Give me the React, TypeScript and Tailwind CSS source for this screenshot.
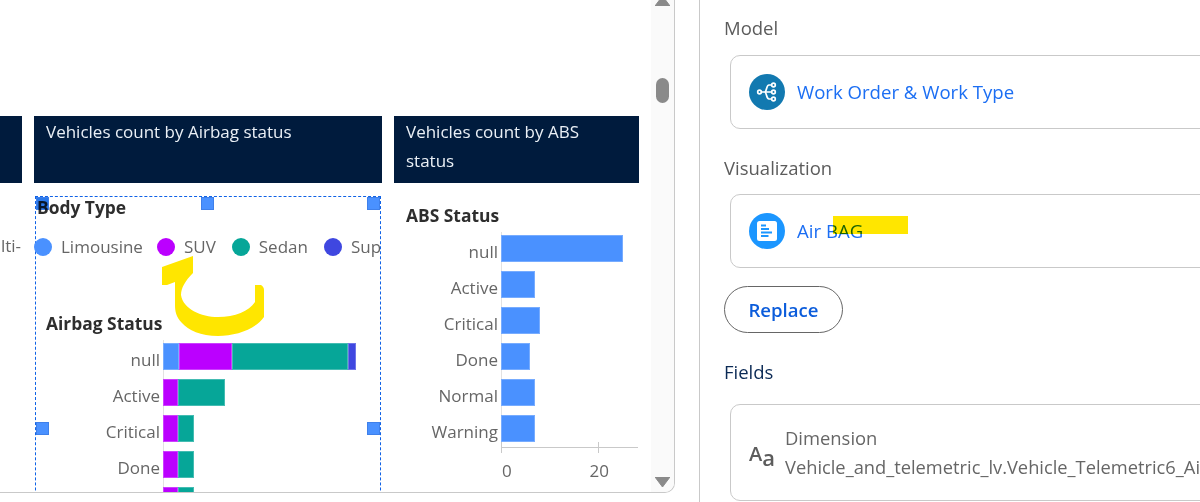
const FONT = "font-['Open_Sans','Noto_Sans',sans-serif]";

type Segment = { width: number; color: string };
type BarRow = { label: string; segments: Segment[] };

const BLUE = 'bg-[#4a91ff]';
const PURPLE = 'bg-[#bb00ff]';
const TEAL = 'bg-[#06a698]';
const INDIGO = 'bg-[#3f47e0]';

const AIRBAG_ROWS: BarRow[] = [
  {
    label: 'null',
    segments: [
      { width: 16, color: BLUE },
      { width: 53, color: PURPLE },
      { width: 116, color: TEAL },
      { width: 8, color: INDIGO },
    ],
  },
  {
    label: 'Active',
    segments: [
      { width: 15, color: PURPLE },
      { width: 47, color: TEAL },
    ],
  },
  {
    label: 'Critical',
    segments: [
      { width: 15, color: PURPLE },
      { width: 16, color: TEAL },
    ],
  },
  {
    label: 'Done',
    segments: [
      { width: 15, color: PURPLE },
      { width: 16, color: TEAL },
    ],
  },
  {
    label: '',
    segments: [
      { width: 15, color: PURPLE },
      { width: 16, color: TEAL },
    ],
  },
];

const ABS_ROWS: BarRow[] = [
  { label: 'null', segments: [{ width: 122, color: BLUE }] },
  { label: 'Active', segments: [{ width: 34, color: BLUE }] },
  { label: 'Critical', segments: [{ width: 39, color: BLUE }] },
  { label: 'Done', segments: [{ width: 29, color: BLUE }] },
  { label: 'Normal', segments: [{ width: 34, color: BLUE }] },
  { label: 'Warning', segments: [{ width: 34, color: BLUE }] },
];

const LEGEND = [
  { label: 'Limousine', color: BLUE, gap: 'mr-[14px]' },
  { label: 'SUV', color: PURPLE, gap: 'mr-[16px]' },
  { label: 'Sedan', color: TEAL, gap: 'mr-[16px]' },
  { label: 'Super', color: INDIGO, gap: '' },
];

function Bars({ rows, labelWidth, axis }: { rows: BarRow[]; labelWidth: string; axis: string }) {
  return (
    <div className="relative flex flex-col gap-[9px]">
      <div className={`absolute w-px bg-[#e2e2e2] ${axis}`} />
      {rows.map((row, idx) => (
        <div key={idx} className="flex h-[27px] items-center">
          <span className={`${labelWidth} pr-[3px] pt-[6px] text-right text-[17px] text-[#666666]`}>{row.label}</span>
          <div className="relative flex h-[27px]">
            {row.segments.map((seg, i) => (
              <div
                key={i}
                className={`${seg.color} h-full shadow-[inset_0_0_0_1px_rgba(255,255,255,0.25)]`}
                style={{ width: seg.width }}
              />
            ))}
          </div>
        </div>
      ))}
    </div>
  );
}

function Handle({ className }: { className: string }) {
  return <div className={`absolute h-[13px] w-[13px] border border-[#3f80ea] ${className}`} />;
}

function DarkHeader({ title, className }: { title: string; className: string }) {
  return (
    <div className={`h-[67px] shrink-0 bg-[#001b3d] pt-[1px] text-[17px] leading-[29px] text-[#eaf0f6] ${className}`}>
      {title}
    </div>
  );
}

function Triangle({ up }: { up?: boolean }) {
  return (
    <svg width="15" height="10" viewBox="0 0 15 10" className="block shrink-0">
      <path d={up ? 'M7.5 0 L15 10 H0 Z' : 'M0 0 H15 L7.5 10 Z'} fill="#8a8a8a" stroke="#8a8a8a" strokeLinejoin="round" />
    </svg>
  );
}

function ModelIcon() {
  return (
    <div className="flex h-9 w-9 shrink-0 items-center justify-center rounded-full bg-[#1279b0]">
      <svg width="24" height="24" viewBox="0 0 24 24" fill="none" stroke="#ffffff" strokeWidth="1.7">
        <circle cx="4.5" cy="12" r="1.8" />
        <circle cx="18.5" cy="5" r="1.8" />
        <circle cx="18.5" cy="12" r="1.8" />
        <circle cx="18.5" cy="19" r="1.8" />
        <path d="M6.5 12H16.5M16.5 5H14C11 5 12 12 9.5 12C12 12 11 19 14 19H16.5" />
      </svg>
    </div>
  );
}

function VizIcon() {
  return (
    <div className="flex h-9 w-9 shrink-0 items-center justify-center rounded-full bg-[#1b96ff]">
      <svg width="20" height="20" viewBox="0 0 20 20">
        <rect width="20" height="20" rx="2.5" fill="#ffffff" />
        <rect x="4" y="3.5" width="5" height="2" fill="#1b96ff" />
        <rect x="4" y="7" width="8" height="2" fill="#1b96ff" />
        <rect x="4" y="10.5" width="11" height="2" fill="#1b96ff" />
        <rect x="4" y="14" width="7.5" height="2" fill="#1b96ff" />
      </svg>
    </div>
  );
}

function Arrow() {
  return (
    <svg width="110" height="90" viewBox="0 0 110 90" className="absolute left-[125px] top-[58px]">
      <path
        d="M1 12 L32 1 V18 C24 26 20 33 20 40 C22 54 40 62 57 62 C74 62 88 56 94 47 V30 H100 C102 31 103 33 103 35 V62 C95 74 75 81 57 81 C40 81 27 75 21 68 C15 62 14 56 14 50 V27 L6 30 H1 Z"
        fill="#ffe600"
      />
    </svg>
  );
}

export default function App() {
  return (
    <div className={`flex h-[502px] w-[1200px] overflow-hidden bg-white ${FONT}`}>
      <div className="flex h-[493px] w-[675px] shrink-0 overflow-hidden rounded-br-[10px] border-r border-b border-[#c9c9c9]">
        <div className="flex min-w-0 flex-1 gap-3 overflow-hidden pt-[116px]">
          <div className="w-[22px] shrink-0">
            <DarkHeader title="" className="" />
            <div className="mt-[51px] flex justify-end overflow-hidden pr-[1px] text-[17px] leading-[24px] text-[#666666]">
              <span className="whitespace-nowrap">lti-</span>
            </div>
          </div>

          <div className="w-[348px] shrink-0">
            <DarkHeader title="Vehicles count by Airbag status" className="px-3" />
            <div className="relative mt-[13px] ml-px h-[400px] w-[346px] border border-dashed border-[#0f62e6]">
              <div className="pl-px text-[17.4px] font-bold leading-[20px] text-[#2e2e2e]">Body Type</div>
              <div className="-ml-[2px] mt-[18px] flex h-6 items-center overflow-hidden text-[17px] text-[#666666]">
                {LEGEND.map((item) => (
                  <div key={item.label} className={`flex shrink-0 items-center gap-[9px] ${item.gap}`}>
                    <span className={`h-[18px] w-[18px] rounded-full ${item.color}`} />
                    <span className="whitespace-nowrap">{item.label}</span>
                  </div>
                ))}
              </div>
              <div className="mt-[52px] pl-[10px] text-[17.4px] font-bold leading-[24px] text-[#2e2e2e]">Airbag Status</div>
              <div className="mt-[8px]">
                <Bars rows={AIRBAG_ROWS} labelWidth="w-[127px]" axis="left-[127px] -top-[3px] -bottom-[5px]" />
              </div>
              <Handle className="left-0 top-0 bg-[#2a78ea] mix-blend-multiply" />
              <Handle className="left-[165px] top-0 bg-[#4a91ff]" />
              <Handle className="right-0 top-0 bg-[#4a91ff]" />
              <Handle className="left-0 top-[225px] bg-[#4a91ff]" />
              <Handle className="right-0 top-[225px] bg-[#4a91ff]" />
              <Arrow />
            </div>
          </div>

          <div className="w-[245px] shrink-0">
            <DarkHeader title="Vehicles count by ABS status" className="px-3" />
            <div className="mt-[19px] pl-3 text-[17.4px] font-bold leading-[26px] text-[#2e2e2e]">ABS Status</div>
            <div className="mt-[7px]">
              <Bars rows={ABS_ROWS} labelWidth="w-[107px]" axis="left-[107px] -top-[3px] -bottom-[11px]" />
            </div>
            <div className="relative ml-[107px] mt-[5px] h-px w-[137px] bg-[#c9c9c9]">
              <div className="absolute -top-[5px] left-0 h-[11px] w-px bg-[#c9c9c9]" />
              <div className="absolute -top-[5px] left-[97px] h-[11px] w-px bg-[#c9c9c9]" />
            </div>
            <div className="ml-[107px] flex w-[108px] justify-between pt-[11px] text-[17px] leading-[24px] text-[#666666]">
              <span className="ml-px">0</span>
              <span>20</span>
            </div>
          </div>
        </div>

        <div className="flex w-[23px] shrink-0 flex-col items-center bg-[#fafafa] pb-[5px]">
          <div className="-mt-[4px]">
            <Triangle up />
          </div>
          <div className="mt-[72px] h-[25px] w-[13px] rounded-full bg-[#8a8a8a]" />
          <div className="mt-auto">
            <Triangle />
          </div>
        </div>
      </div>

      <div className="ml-6 flex min-w-0 flex-1 flex-col overflow-hidden border-l border-[#c9c9c9] pl-6">
        <div className="mt-[16px] text-[18.5px] leading-[24px] text-[#5c5c5c]">Model</div>
        <div className="ml-[6px] mt-[15px] flex h-[74px] w-[520px] shrink-0 items-center gap-3 rounded-[10px] border border-[#c9c9c9] pl-[18px]">
          <ModelIcon />
          <span className="text-[18.6px] text-[#1b6ef3]">Work Order &amp; Work Type</span>
        </div>
        <div className="mt-[27px] text-[18.5px] leading-[24px] text-[#5c5c5c]">Visualization</div>
        <div className="ml-[6px] mt-[14px] flex h-[74px] w-[520px] shrink-0 items-center gap-3 rounded-[10px] border border-[#c9c9c9] pl-[18px]">
          <VizIcon />
          <span className="relative text-[18.6px] text-[#1b6ef3]">
            Air BAG
            <span className="absolute left-[36px] top-[-1px] h-[18px] w-[75px] bg-[#ffe600] mix-blend-multiply" />
          </span>
        </div>
        <button className="mt-[18px] h-[47px] w-[119px] shrink-0 rounded-full border border-[#666666] text-[18.6px] font-semibold text-[#0b5cdb]">
          Replace
        </button>
        <div className="mt-[27px] text-[18.5px] leading-[24px] text-[#0b2a55]">Fields</div>
        <div className="ml-[6px] mt-[20px] flex h-[97px] w-[520px] shrink-0 items-center gap-3 rounded-[10px] border border-[#c9c9c9] pl-[18px]">
          <span className="flex w-[24px] shrink-0 items-baseline text-[#5c5c5c]">
            <span className="text-[20px] font-semibold leading-none">A</span>
            <span className="translate-y-[5px] text-[22px] font-semibold leading-none">a</span>
          </span>
          <div className="-mt-px min-w-0 leading-[29px] text-[#666666]">
            <div className="text-[18.4px]">Dimension</div>
            <div className="whitespace-nowrap text-[18.3px]">Vehicle_and_telemetric_lv.Vehicle_Telemetric6_Airbag</div>
          </div>
        </div>
      </div>
    </div>
  );
}
